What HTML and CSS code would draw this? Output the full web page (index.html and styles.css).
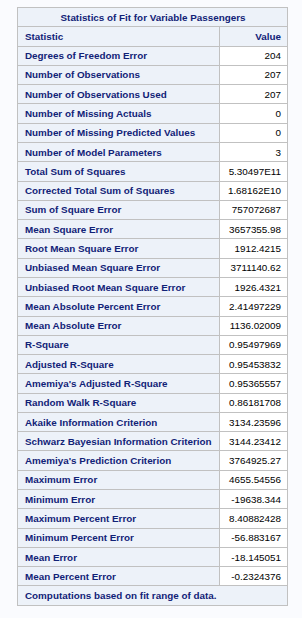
FILE: index.html
```html
<!DOCTYPE html>
<html>
<head>
<meta charset="utf-8">
<link rel="stylesheet" href="styles.css">
</head>
<body>
<table class="fit">
  <colgroup>
    <col class="c-label">
    <col class="c-value">
  </colgroup>
  <thead>
    <tr class="title"><th colspan="2">Statistics of Fit for Variable Passengers</th></tr>
    <tr class="head"><th class="lbl">Statistic</th><th class="num">Value</th></tr>
  </thead>
  <tbody>
    <tr><th>Degrees of Freedom Error</th><td>204</td></tr>
    <tr><th>Number of Observations</th><td>207</td></tr>
    <tr><th>Number of Observations Used</th><td>207</td></tr>
    <tr><th>Number of Missing Actuals</th><td>0</td></tr>
    <tr><th>Number of Missing Predicted Values</th><td>0</td></tr>
    <tr><th>Number of Model Parameters</th><td>3</td></tr>
    <tr><th>Total Sum of Squares</th><td>5.30497E11</td></tr>
    <tr><th>Corrected Total Sum of Squares</th><td>1.68162E10</td></tr>
    <tr><th>Sum of Square Error</th><td>757072687</td></tr>
    <tr><th>Mean Square Error</th><td>3657355.98</td></tr>
    <tr><th>Root Mean Square Error</th><td>1912.4215</td></tr>
    <tr><th>Unbiased Mean Square Error</th><td>3711140.62</td></tr>
    <tr><th>Unbiased Root Mean Square Error</th><td>1926.4321</td></tr>
    <tr><th>Mean Absolute Percent Error</th><td>2.41497229</td></tr>
    <tr><th>Mean Absolute Error</th><td>1136.02009</td></tr>
    <tr><th>R-Square</th><td>0.95497969</td></tr>
    <tr><th>Adjusted R-Square</th><td>0.95453832</td></tr>
    <tr><th>Amemiya's Adjusted R-Square</th><td>0.95365557</td></tr>
    <tr><th>Random Walk R-Square</th><td>0.86181708</td></tr>
    <tr><th>Akaike Information Criterion</th><td>3134.23596</td></tr>
    <tr><th>Schwarz Bayesian Information Criterion</th><td>3144.23412</td></tr>
    <tr><th>Amemiya's Prediction Criterion</th><td>3764925.27</td></tr>
    <tr><th>Maximum Error</th><td>4655.54556</td></tr>
    <tr><th>Minimum Error</th><td>-19638.344</td></tr>
    <tr><th>Maximum Percent Error</th><td>8.40882428</td></tr>
    <tr><th>Minimum Percent Error</th><td>-56.883167</td></tr>
    <tr><th>Mean Error</th><td>-18.145051</td></tr>
    <tr><th>Mean Percent Error</th><td>-0.2324376</td></tr>
  </tbody>
  <tfoot>
    <tr class="foot"><th colspan="2">Computations based on fit range of data.</th></tr>
  </tfoot>
</table>
</body>
</html>
```

FILE: styles.css
```css
html, body {
  margin: 0;
  padding: 0;
  background: #fafbfe;
}

body {
  padding: 7px 0 0 17px;
  font-family: "Liberation Sans", Arial, sans-serif;
  font-size: 9.85px;
}

.fit {
  border-collapse: collapse;
  border: 1px solid #c1c1c1;
  width: 270px;
  table-layout: fixed;
}

.c-label {
  width: 202px;
}

.c-value {
  width: 68px;
}

.fit tr {
  height: 19.29px;
}

.fit th,
.fit td {
  border: 1px solid #c1c1c1;
  padding: 0 6px 0 7px;
  vertical-align: middle;
  line-height: 11px;
  white-space: nowrap;
}

.fit th {
  background: #edf2f9;
  color: #112277;
  font-weight: bold;
  text-align: left;
}

.fit td {
  background: #ffffff;
  color: #000000;
  text-align: right;
}

.fit .title th {
  text-align: center;
}

.fit .head .num {
  text-align: right;
}
```
